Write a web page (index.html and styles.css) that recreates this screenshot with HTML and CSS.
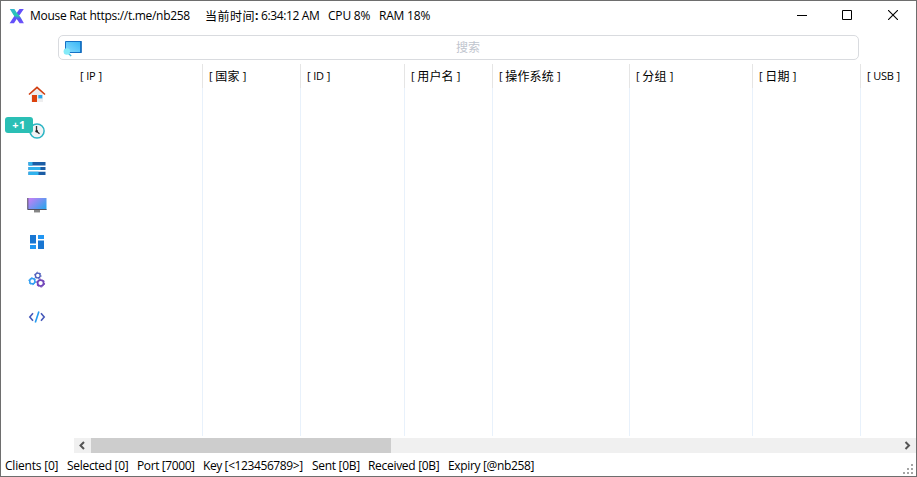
FILE: index.html
```html
<!DOCTYPE html>
<html lang="zh-CN">
<head>
<meta charset="utf-8">
<title>Mouse Rat</title>
<link rel="stylesheet" href="styles.css">
</head>
<body>
<div class="window">
  <header class="titlebar">
    <svg class="logo" width="16" height="16" viewBox="0 0 16 16"><defs><linearGradient id="lg" x1="0" y1="0" x2="0" y2="1"><stop offset="0" stop-color="#37b5cf"/><stop offset=".45" stop-color="#24c9b0"/><stop offset=".7" stop-color="#5b50f5"/><stop offset="1" stop-color="#7354fa"/></linearGradient></defs><path d="M10.5 1h4.3L11 6.5 8 10.5l-3 4.8H.6L5 8.5z" fill="#6350fa"/><path d="M.8 1h4.6L8 5l3.4 4 3.5 6.3h-4.3L7.5 10.7 4.5 7z" fill="url(#lg)"/></svg>
    <span class="t-title">Mouse Rat https://t.me/nb258</span>
    <span class="t-time"><span class="cjk">当前时间</span><b>:</b><span>6:34:12 AM</span></span>
    <span class="t-cpu">CPU 8%</span>
    <span class="t-ram">RAM 18%</span>
    <div class="controls">
      <svg class="min" width="10" height="10"><path d="M0 5.5h10" stroke="#000"/></svg>
      <svg width="10" height="10"><path d="M.5.5h9v9h-9z" fill="none" stroke="#000"/></svg>
      <svg width="10" height="10"><path d="M0 0l10 10M10 0L0 10" stroke="#000" stroke-width="1.1"/></svg>
    </div>
  </header>
  <div class="search">
    <svg width="20" height="18" viewBox="0 0 20 18"><defs><linearGradient id="sg" x1="1" x2="0" y2="1"><stop stop-color="#36b5f5"/><stop offset="1" stop-color="#8adcff"/></linearGradient></defs><path d="M2.5 2.5H18v11H2.5z" fill="url(#sg)" stroke="#1571c5"/><path d="M18 2v12" stroke="#0863b8" stroke-width="1.3"/><path d="M5.5 14.5l2.7 2.5" stroke="#48bcdf" stroke-width="1.4"/><circle cx="3.8" cy="12.5" r="3.2" fill="#83eaf8"/></svg>
    <span>搜索</span>
  </div>
  <div class="main">
    <nav class="sidebar">
      <div><svg width="20" height="20" viewBox="0 0 20 20"><path d="M4 9l6-6 6 6v9H4z" fill="#eeeeef"/><path d="M2 10.5l8-7.2 8 7.2" fill="none" stroke="#d13c0e" stroke-width="1.6"/><path d="M5 11h5v7H5z" fill="#dc430e"/><path d="M11.3 11h4v3.4h-4z" fill="#29a7eb"/></svg></div>
      <div><svg width="20" height="20" viewBox="0 0 20 20"><circle cx="10" cy="10" r="7.1" fill="#f3f3f5" stroke="#2bb5c4" stroke-width="1.5"/><path d="M9.5 5v5.3l3 2.5" fill="none" stroke="#333" stroke-width="1.3"/><circle cx="9.7" cy="10.3" r="1.3" fill="#222"/></svg><b class="badge">+1</b></div>
      <div><svg width="20" height="20" viewBox="0 0 20 20"><path d="M1.5 4h17v3.5h-17zM1.5 9h17v3h-17zM1.5 13.8h17v3.2h-17z" fill="#1b5da5"/><path d="M1.5 4h4v3.5h-4zM1.5 9h12v3h-12zM1.5 13.8h10v3.2h-10z" fill="#30b2ed"/></svg></div>
      <div><svg width="20" height="20" viewBox="0 0 20 20"><defs><linearGradient id="mg" x2="1" y2=".7"><stop offset=".15" stop-color="#b982f5"/><stop offset="1" stop-color="#32a3ed"/></linearGradient></defs><path d="M.5 3h19v12H.5z" fill="url(#mg)"/><path d="M.8 3v11.5h18.7" fill="none" stroke="#55515d"/><path d="M7 15h6v2H7z" fill="#868686"/><path d="M7 17h6v1H7z" fill="#c9c9c9"/></svg></div>
      <div><svg width="20" height="20" viewBox="0 0 20 20"><path d="M3 3h6v8.5H3zM11 8.5h6V17h-6z" fill="#1976d2"/><path d="M11 3h6v4h-6zM3 13h6v4H3z" fill="#2196f3"/></svg></div>
      <div><svg width="20" height="20" viewBox="0 0 20 20" fill="none"><g stroke="#5060bd"><circle cx="10.8" cy="5.5" r="2.4" stroke-width="1.4"/><circle cx="10.8" cy="5.5" r="3.3" stroke-width="1" stroke-dasharray="1.45 2"/></g><g stroke="#319ff2"><circle cx="5.3" cy="11.2" r="2.6" stroke-width="1.5"/><circle cx="5.3" cy="11.2" r="3.5" stroke-dasharray="1.6 2.05"/></g><g stroke="#7246b9"><circle cx="13.6" cy="13.1" r="3" stroke-width="1.7"/><circle cx="13.6" cy="13.1" r="4" stroke-dasharray="2 2.19"/></g></svg></div>
      <div><svg width="20" height="20" viewBox="0 0 20 20" fill="none" stroke-width="1.6"><path d="M6 6.3L2.8 10 6 13.7M14 6.3l3.2 3.7-3.2 3.7" stroke="#4659b9"/><path d="M11.9 4.5L8.3 15.6" stroke="#249bf0"/></svg></div>
    </nav>
    <section class="grid">
      <div class="columns">
        <div class="col"><div class="head"><i>[</i><span>IP</span><i>]</i></div></div>
        <div class="col"><div class="head"><i>[</i><span class="cjk">国家</span><i>]</i></div></div>
        <div class="col"><div class="head"><i>[</i><span>ID</span><i>]</i></div></div>
        <div class="col"><div class="head"><i>[</i><span class="cjk">用户名</span><i>]</i></div></div>
        <div class="col"><div class="head"><i>[</i><span class="cjk">操作系统</span><i>]</i></div></div>
        <div class="col"><div class="head"><i>[</i><span class="cjk">分组</span><i>]</i></div></div>
        <div class="col"><div class="head"><i>[</i><span class="cjk">日期</span><i>]</i></div></div>
        <div class="col"><div class="head"><i>[</i><span>USB</span><i>]</i></div></div>
      </div>
      <div class="scroll">
        <svg width="17" height="15"><path d="M10 4L6.5 7.5 10 11" fill="none" stroke="#555" stroke-width="2"/></svg>
        <div class="thumb"></div>
        <svg width="17" height="15"><path d="M6.5 4L10 7.5 6.5 11" fill="none" stroke="#555" stroke-width="2"/></svg>
      </div>
    </section>
  </div>
  <footer class="status">
    <span class="s1">Clients [0]</span><span class="s2">Selected [0]</span><span class="s3">Port [7000]</span><span class="s4">Key [&lt;123456789&gt;]</span><span class="s5">Sent [0B]</span><span class="s6">Received [0B]</span><span class="s7">Expiry [@nb258]</span>
    <svg class="grip" width="10" height="10" fill="#a5a5a5"><path d="M8 0h2v2H8zM4 4h2v2H4zM8 4h2v2H8zM0 8h2v2H0zM4 8h2v2H4zM8 8h2v2H8z"/></svg>
  </footer>
</div>
</body>
</html>
```
FILE: styles.css
```css
* { box-sizing: border-box; }
body { margin: 0; background: #fff; }
svg { display: block; flex: none; }
.window {
  width: 917px; height: 477px; border: 1px solid #6e6e6e; overflow: hidden;
  display: flex; flex-direction: column; color: #000;
  font: 12px/16px "Open Sans", "Noto Sans CJK SC", sans-serif;
}
.cjk { font-family: "Noto Sans CJK SC", sans-serif; }
.titlebar { height: 30px; flex: none; display: flex; align-items: center; padding-left: 8px; white-space: nowrap; }
.logo { margin-right: 5px; }
.t-title { width: 175px; letter-spacing: -.3px; }
.t-time { width: 123px; letter-spacing: -.37px; display: flex; align-items: center; }
.t-time .cjk { width: 50px; letter-spacing: .5px; }
.t-time b { width: 6px; }
.t-cpu { width: 51px; letter-spacing: -.2px; }
.t-ram { letter-spacing: -.2px; }
.controls { display: flex; gap: 36px; margin: -2px 18px 0 auto; }
.min { margin-right: -1px; }
.search {
  flex: none; width: 801px; height: 25px; margin: 4px 0 0 57px; padding-left: 4px;
  border: 1px solid #d9dbdf; border-radius: 5px; display: flex; align-items: center;
}
.search span { flex: 1; padding-right: 5px; text-align: center; color: #bfc5ce; }
.main { display: flex; height: 394px; flex: none; padding-top: 4px; }
.sidebar { width: 73px; flex: none; padding-top: 11px; }
.sidebar div { height: 37.2px; padding-left: 26px; display: flex; align-items: center; position: relative; }
.badge {
  position: absolute; left: 4px; top: 5px; width: 28px; height: 16px; border-radius: 3px;
  background: #2abfb5; color: #fff; font: bold 11px/16px "Open Sans", sans-serif; text-align: center; letter-spacing: .4px;
}
.grid { width: 842px; flex: none; }
.columns { display: grid; grid-template-columns: 129px 98px 104px 88px 137px 123px 108px 55px; height: 372px; }
.col { border-right: 1px solid #e8f1fb; }
.col:last-child { border: 0; }
.head { height: 24px; padding-left: 6px; display: flex; align-items: center; gap: 3px; margin-right: -1px; border-right: 1px solid #e5e5e5; white-space: nowrap; font-size: 11px; letter-spacing: -.3px; }
.head .cjk { font-size: 12px; letter-spacing: .15px; }
.head i { font-style: normal; }
.col:last-child .head { border: 0; }
.scroll { height: 15px; margin-top: 2px; display: flex; background: #f0f0f0; }
.thumb { width: 300px; margin-right: auto; background: #cdcdcd; }
.status { height: 22px; flex: none; display: flex; align-items: center; padding: 2px 0 0 4px; white-space: nowrap; letter-spacing: -.3px; }
.s1 { width: 62px; letter-spacing: -.2px; }
.s2 { width: 70px; }
.s3 { width: 66px; letter-spacing: -.4px; }
.s4 { width: 109px; letter-spacing: -.4px; }
.s5 { width: 56px; }
.s6 { width: 80px; }
.s7 { letter-spacing: -.35px; }
.grip { margin: 5px 3px 0 auto; }
```
